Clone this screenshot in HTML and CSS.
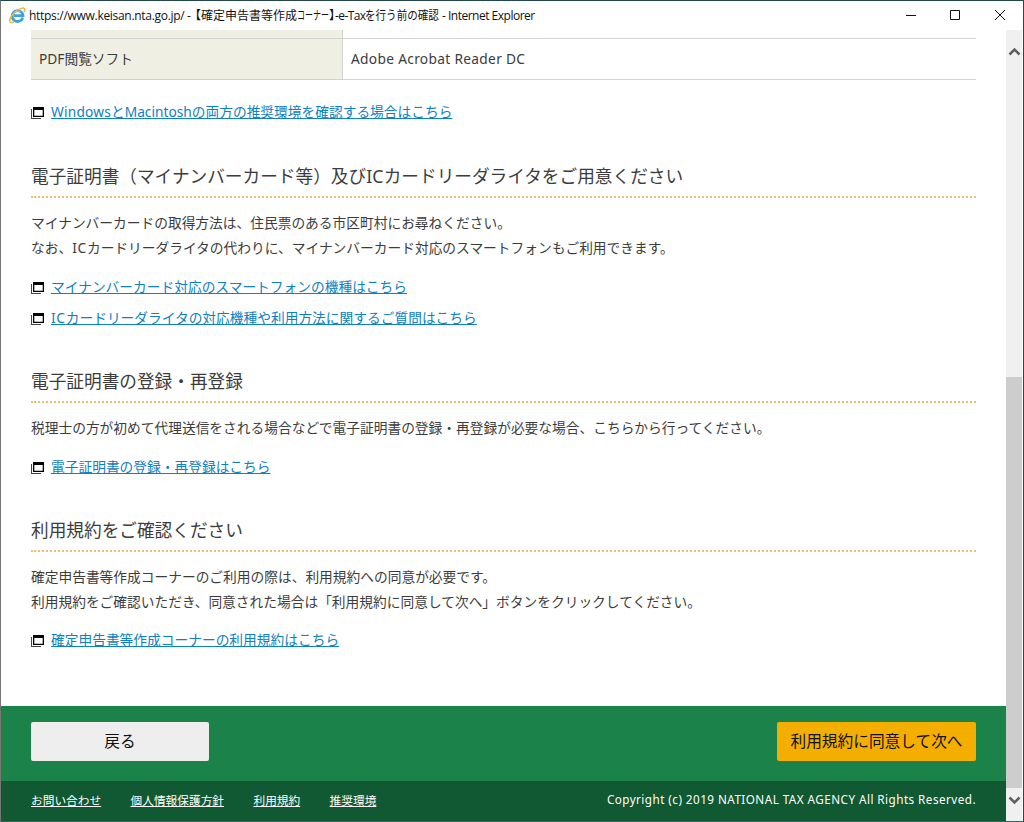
FILE: index.html
```html
<!DOCTYPE html>
<html lang="ja">
<head>
<meta charset="UTF-8">
<title>【確定申告書等作成コーナー】-e-Taxを行う前の確認</title>
<link rel="stylesheet" href="styles.css">
</head>
<body>
<div class="window">
    <div class="titlebar">
        <svg class="ie-icon" width="17" height="17" viewBox="0 0 17 17" fill="none">
            <path d="M13.8 10.6A5.4 5.4 0 1 1 14 8.7H5" stroke="#3ba3dc" stroke-width="2.8"/>
            <path d="M4.4 6.2A4.7 4.7 0 0 1 11.5 5" stroke="#8bd3f3" stroke-width="1"/>
            <path d="M5 14.800C0 17.500-.5 12.500 3 8.500C7 3.500 13 .2 15.200 1.300C16.300 2 15.800 3.400 15 4.800" stroke="#e9b93c" stroke-width="1.500"/>
        </svg>
        <div class="title"><span class="t-url">https://www.keisan.nta.go.jp/</span><span class="t-dash">-</span><span class="t-open">【</span><span class="t-kanji">確定申告書等作成</span><span class="t-kana">コーナー</span><span class="t-close">】</span><span class="t-etax">-e-Tax</span><span class="t-check">を行う前の確認</span><span class="t-app">- Internet Explorer</span></div>
        <svg class="controls" width="102" height="12" viewBox="0 0 102 12" fill="none" stroke="#111">
            <path d="M1 5.500H11M45.500 .5H54.500V9.500H45.500ZM90 0L100 10M100 0L90 10"/>
        </svg>
    </div>
    <div class="main">
        <div class="page">
            <div class="content">
                <table class="env">
                    <tr class="cut"><th></th><td></td></tr>
                    <tr><th>PDF閲覧ソフト</th><td><span class="adobe">Adobe Acrobat Reader DC</span></td></tr>
                </table>
                <ul class="links first">
                    <li><svg class="win" width="13" height="12" viewBox="0 0 13 12"><path d="M0 2H1V11H10V12H0Z" fill="#444"/><path d="M2 0H13V10H2ZM3.300 3V8.800H11.700V3Z" fill="#000" fill-rule="evenodd"/></svg><a href="#"><span class="latin">Windows</span>とMacintoshの両方の推奨環境を確認する場合はこちら</a></li>
                </ul>

                <h2>電子証明書（マイナンバーカード等）及び<span class="latin">IC</span>カードリーダライタをご用意ください</h2>
                <p>マイナンバーカードの取得方法は、住民票のある市区町村にお尋ねください。<br>なお、<span class="ic">IC</span>カードリーダライタの代わりに、マイナンバーカード対応のスマートフォンもご利用できます。</p>
                <ul class="links">
                    <li><svg class="win" width="13" height="12" viewBox="0 0 13 12"><path d="M0 2H1V11H10V12H0Z" fill="#444"/><path d="M2 0H13V10H2ZM3.300 3V8.800H11.700V3Z" fill="#000" fill-rule="evenodd"/></svg><a href="#">マイナンバーカード対応のスマートフォンの機種はこちら</a></li>
                    <li><svg class="win" width="13" height="12" viewBox="0 0 13 12"><path d="M0 2H1V11H10V12H0Z" fill="#444"/><path d="M2 0H13V10H2ZM3.300 3V8.800H11.700V3Z" fill="#000" fill-rule="evenodd"/></svg><a href="#"><span class="ic">IC</span>カードリーダライタの対応機種や利用方法に関するご質問はこちら</a></li>
                </ul>

                <h2>電子証明書の登録・再登録</h2>
                <p>税理士の方が初めて代理送信をされる場合などで電子証明書の登録・再登録が必要な場合、こちらから行ってください。</p>
                <ul class="links">
                    <li><svg class="win" width="13" height="12" viewBox="0 0 13 12"><path d="M0 2H1V11H10V12H0Z" fill="#444"/><path d="M2 0H13V10H2ZM3.300 3V8.800H11.700V3Z" fill="#000" fill-rule="evenodd"/></svg><a href="#">電子証明書の登録・再登録はこちら</a></li>
                </ul>

                <h2>利用規約をご確認ください</h2>
                <p>確定申告書等作成コーナーのご利用の際は、利用規約への同意が必要です。<br>利用規約をご確認いただき、同意された場合は「利用規約に同意して次へ」ボタンをクリックしてください。</p>
                <ul class="links">
                    <li><svg class="win" width="13" height="12" viewBox="0 0 13 12"><path d="M0 2H1V11H10V12H0Z" fill="#444"/><path d="M2 0H13V10H2ZM3.300 3V8.800H11.700V3Z" fill="#000" fill-rule="evenodd"/></svg><a href="#">確定申告書等作成コーナーの利用規約はこちら</a></li>
                </ul>
            </div>
            <div class="actions">
                <button class="btn back">戻る</button>
                <button class="btn next">利用規約に同意して次へ</button>
            </div>
            <div class="footer">
                <div class="footer-links">
                    <a href="#">お問い合わせ</a>
                    <a href="#">個人情報保護方針</a>
                    <a href="#">利用規約</a>
                    <a href="#">推奨環境</a>
                </div>
                <div class="copyright">Copyright (c) 2019 NATIONAL TAX AGENCY All Rights Reserved.</div>
            </div>
        </div>
        <div class="scrollbar">
            <svg width="16" height="44" viewBox="0 0 16 44" fill="none" stroke="#606060" stroke-width="2.500"><path d="M3.500 24.500L8.500 19.500L13.500 24.500"/></svg>
            <div class="thumb"></div>
            <svg width="16" height="33" viewBox="0 0 16 33" fill="none" stroke="#606060" stroke-width="2.500"><path d="M3.500 9.500L8.500 14.500L13.500 9.500"/></svg>
        </div>
    </div>
</div>
</body>
</html>
```
FILE: styles.css
```css
* {
    box-sizing: border-box;
}
body {
    margin: 0;
    overflow: hidden;
    font-family: "Noto Sans", "Noto Sans CJK JP", sans-serif;
    font-size: 13.73px;
    color: #3c3c3c;
    background: #fff;
}
.window {
    width: 1024px;
    height: 822px;
    display: flex;
    flex-direction: column;
    border: 1px solid #23494b;
    border-left-color: #777;
    border-bottom-color: #3b6260;
}
.titlebar {
    height: 29px;
    flex: none;
    display: flex;
    align-items: center;
    padding: 0 16px 0 8px;
    color: #111;
}
.ie-icon {
    margin-right: 3px;
}
.title {
    display: flex;
    flex: 1;
    font-family: "Open Sans", "Noto Sans CJK JP", sans-serif;
    font-size: 12px;
    line-height: 20px;
    white-space: nowrap;
}
.title span {
    flex: none;
}
.t-url {
    width: 158px;
    letter-spacing: -0.3px;
}
.t-dash {
    width: 8px;
}
.t-open {
    width: 6px;
    font-feature-settings: "halt";
}
.t-kanji {
    width: 96px;
}
.t-kana {
    width: 32px;
    transform: scaleX(0.67);
    transform-origin: left;
}
.t-close {
    width: 6px;
    font-feature-settings: "halt";
}
.t-etax {
    width: 30px;
    letter-spacing: -0.6px;
}
.t-check {
    width: 77px;
    transform: scaleX(0.88);
    transform-origin: left;
}
.t-app {
    letter-spacing: -0.5px;
}

.main {
    flex: 1;
    display: flex;
    min-height: 0;
}
.page {
    width: 1005px;
    display: flex;
    flex-direction: column;
}
.content {
    flex: 1;
    padding: 0 30px;
}
.env {
    width: 945px;
    border-collapse: separate;
    border-spacing: 0;
}
.env th,
.env td {
    height: 41px;
    padding: 0 8px 2px;
    border-bottom: 1px solid #d3d3d0;
    text-align: left;
    font-weight: normal;
}
.env th {
    width: 312px;
    background: #f0efe3;
    border-right: 1px solid #d3d3d0;
}
.env .cut th,
.env .cut td {
    height: 9px;
}
.adobe {
    letter-spacing: 0.32px;
}
.links {
    list-style: none;
    margin: 10.3px 0 0;
    padding: 0;
}
.links.first {
    margin-top: 15px;
}
.links.first + h2 {
    margin-top: 38px;
}
.links li {
    height: 31px;
    display: flex;
    align-items: center;
}
.links a {
    color: #0f80c1;
    text-underline-offset: 1px;
}
.ic {
    letter-spacing: 0.7px;
}
.latin {
    letter-spacing: 0.2px;
}
.win {
    margin: 4px 7px 0 0;
}
h2 {
    margin: 36.5px 0 12px;
    padding-bottom: 8px;
    border-bottom: 2px dotted #edbd72;
    font-size: 17.66px;
    line-height: 24px;
    font-weight: normal;
}
p {
    margin: 0;
    line-height: 25px;
}

.actions {
    height: 75px;
    display: flex;
    justify-content: space-between;
    padding: 16px 30px 0;
    background: #1b824a;
}
.btn {
    height: 39px;
    padding: 0 0 2px;
    border: none;
    border-radius: 2px;
    font-family: inherit;
    font-size: 15.7px;
    color: #111;
}
.back {
    width: 178px;
    background: #eee;
}
.next {
    width: 199px;
    background: #f4ae00;
}
.footer {
    height: 40px;
    display: flex;
    justify-content: space-between;
    align-items: center;
    padding: 0 30px 4px;
    background: #115932;
    color: #fff;
    font-size: 11.7px;
}
.footer-links {
    display: flex;
    gap: 29.4px;
}
.footer a {
    color: #fff;
    text-underline-offset: 1px;
}
.copyright {
    letter-spacing: 0.46px;
}
.scrollbar {
    width: 16px;
    display: flex;
    flex-direction: column;
    background: #f0f0f0;
}
.scrollbar svg {
    flex: none;
}
.thumb {
    flex: 1;
    margin-top: 303px;
    background: #cdcdcd;
}
```
